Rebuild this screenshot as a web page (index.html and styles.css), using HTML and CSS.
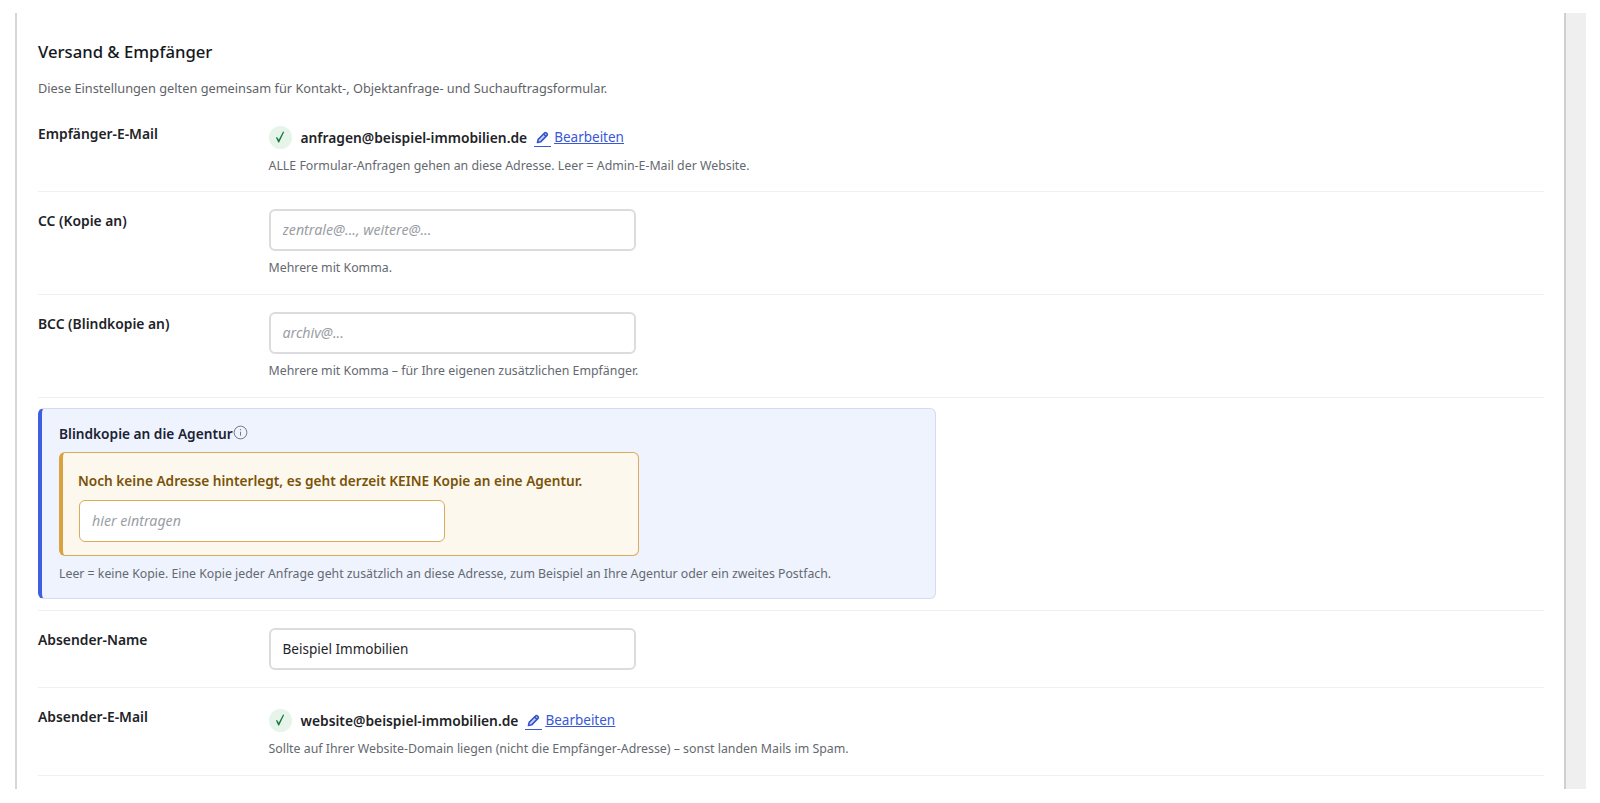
FILE: index.html
```html
<!DOCTYPE html>
<html lang="de">
<head>
<meta charset="utf-8">
<title>Versand &amp; Empfänger</title>
<link rel="stylesheet" href="styles.css">
</head>
<body>
<div class="frame">
  <main class="panel">
    <h2 class="title">Versand &amp; Empfänger</h2>
    <p class="intro">Diese Einstellungen gelten gemeinsam für Kontakt-, Objektanfrage- und Suchauftragsformular.</p>

    <section class="row row-first">
      <div class="label">Empfänger-E-Mail</div>
      <div class="field">
        <div class="verified">
          <span class="check"><svg viewBox="0 0 16 16" width="14" height="14"><path d="M3.4 8.7 4.6 8 6.6 11 11.5 1.8 12.7 2.4 7 14.2 6 14.2Z" fill="#14783a"/></svg></span>
          <strong class="addr">anfragen@beispiel-immobilien.de</strong>
          <a class="edit" href="#"><span class="pen"><svg viewBox="0 0 16 16" width="15" height="15"><path d="M2.6 13.4 3.4 10 10.2 3.2a1.4 1.4 0 0 1 2 0l.6.6a1.4 1.4 0 0 1 0 2L6 12.6Z" fill="#c9d4f7" stroke="#3452cc" stroke-width="1.7" stroke-linejoin="round"/><path d="M9.2 4.2 11.8 6.8" stroke="#3452cc" stroke-width="1.6"/></svg></span><span class="edit-text">Bearbeiten</span></a>
        </div>
        <p class="hint">ALLE Formular-Anfragen gehen an diese Adresse. Leer = Admin-E-Mail der Website.</p>
      </div>
    </section>

    <section class="row">
      <div class="label">CC (Kopie an)</div>
      <div class="field">
        <input class="input" type="text" placeholder="zentrale@..., weitere@...">
        <p class="hint hint-input">Mehrere mit Komma.</p>
      </div>
    </section>

    <section class="row">
      <div class="label">BCC (Blindkopie an)</div>
      <div class="field">
        <input class="input" type="text" placeholder="archiv@...">
        <p class="hint hint-input">Mehrere mit Komma – für Ihre eigenen zusätzlichen Empfänger.</p>
      </div>
    </section>

    <section class="row row-agency">
      <div class="agency">
        <div class="agency-title">Blindkopie an die Agentur<svg class="info" viewBox="0 0 16 16" width="15" height="15"><circle cx="8" cy="8" r="6.8" fill="none" stroke="#6b7280" stroke-width="1"/><path d="M8 7.2V11.4" stroke="#6b7280" stroke-width="1"/><circle cx="8" cy="5" r=".7" fill="#6b7280"/></svg></div>
        <div class="warning">
          <p class="warning-text">Noch keine Adresse hinterlegt, es geht derzeit KEINE Kopie an eine Agentur.</p>
          <input class="input input-warn" type="text" placeholder="hier eintragen">
        </div>
        <p class="hint hint-agency">Leer = keine Kopie. Eine Kopie jeder Anfrage geht zusätzlich an diese Adresse, zum Beispiel an Ihre Agentur oder ein zweites Postfach.</p>
      </div>
    </section>

    <section class="row">
      <div class="label">Absender-Name</div>
      <div class="field">
        <input class="input" type="text" value="Beispiel Immobilien">
      </div>
    </section>

    <section class="row">
      <div class="label">Absender-E-Mail</div>
      <div class="field">
        <div class="verified">
          <span class="check"><svg viewBox="0 0 16 16" width="14" height="14"><path d="M3.4 8.7 4.6 8 6.6 11 11.5 1.8 12.7 2.4 7 14.2 6 14.2Z" fill="#14783a"/></svg></span>
          <strong class="addr">website@beispiel-immobilien.de</strong>
          <a class="edit" href="#"><span class="pen"><svg viewBox="0 0 16 16" width="15" height="15"><path d="M2.6 13.4 3.4 10 10.2 3.2a1.4 1.4 0 0 1 2 0l.6.6a1.4 1.4 0 0 1 0 2L6 12.6Z" fill="#c9d4f7" stroke="#3452cc" stroke-width="1.7" stroke-linejoin="round"/><path d="M9.2 4.2 11.8 6.8" stroke="#3452cc" stroke-width="1.6"/></svg></span><span class="edit-text">Bearbeiten</span></a>
        </div>
        <p class="hint">Sollte auf Ihrer Website-Domain liegen (nicht die Empfänger-Adresse) – sonst landen Mails im Spam.</p>
      </div>
    </section>
  </main>
  <div class="scrollbar"></div>
</div>
</body>
</html>
```

FILE: styles.css
```css
* { box-sizing: border-box; }
html, body { margin: 0; height: 100%; background: #fff; overflow: hidden; }
body {
  font-family: "Noto Sans", sans-serif;
  font-size: 14px;
  color: #1d2327;
  padding: 13px 14px 14px 15px;
}
.frame { display: flex; height: 776px; }
.panel {
  flex: 1;
  min-width: 0;
  border-left: 2px solid #d6d6d6;
  padding: 0 20px 0 21px;
  overflow: hidden;
}
.scrollbar {
  width: 22px;
  background: #efefef;
  border-left: 2px solid #cfcfcf;
}
.title {
  margin: 0;
  padding-top: 26px;
  font-size: 16.7px;
  line-height: 26px;
  font-weight: 500;
  color: #14181c;
}
.intro {
  margin: 13px 0 7px;
  font-size: 12.77px;
  line-height: 20px;
  color: #5f6368;
}
.row {
  display: flex;
  padding: 17px 0;
  border-bottom: 1px solid #f0f0f1;
}
.row-first { padding-bottom: 16px; }
.label {
  width: 230.5px;
  flex: none;
  margin-top: 2px;
  font-weight: 600;
  font-size: 13.85px;
  line-height: 20px;
  color: #1d2327;
}
.field { flex: 1; min-width: 0; }
.verified { display: flex; align-items: center; height: 24px; margin-top: 3px; }
.check {
  width: 23px;
  height: 23px;
  border-radius: 50%;
  background: #e6f4ea;
  display: flex;
  align-items: center;
  justify-content: center;
  margin-right: 9px;
}
.addr { font-weight: 600; font-size: 13.8px; color: #1d2327; }
.edit { display: flex; align-items: center; margin-left: 7px; color: #3858d6; font-size: 13.5px; }
.pen { display: flex; width: 17px; justify-content: center; border-bottom: 1px solid #3858d6; padding-bottom: 1px; margin: 3px 3px 0 0; }
.edit-text { text-decoration: underline; }
.hint { margin: 8px 0 0; font-size: 12.35px; line-height: 18px; color: #646970; }
.hint-input { margin-top: 8px; }
.input {
  display: block;
  width: 367.5px;
  height: 42px;
  padding: 0 12px;
  border: 2px solid #dcdcde;
  border-radius: 6px;
  background: #fff;
  font-family: "Noto Sans", sans-serif;
  font-size: 13.56px;
  color: #1d2327;
  outline: none;
}
.input::placeholder { color: #9a9ea5; font-style: italic; font-size: 14.2px; opacity: 1; }
.row-agency { padding: 10px 0 11px; }
.agency {
  width: 898px;
  height: 191px;
  background: #eef3fe;
  border: 1px solid #d3dcf2;
  border-left: 4px solid #3f5fe0;
  border-radius: 6px;
  padding: 15px 17px 0 17px;
}
.agency-title { display: flex; align-items: center; font-weight: 600; font-size: 13.7px; line-height: 20px; height: 20px; color: #1a2233; }
.info { margin: -4px 0 0 0; }
.warning {
  width: 580px;
  height: 104px;
  margin-top: 8px;
  background: #fcf8ee;
  border: 1px solid #d9ab5a;
  border-left: 4px solid #d8a23f;
  border-radius: 6px;
  padding: 18px 15px 0 16px;
}
.warning-text { margin: 0 0 9px -1px; font-weight: 600; font-size: 13.65px; line-height: 20px; color: #7a5208; }
.input-warn { width: 366px; border: 1.5px solid #d9ab5a; }
.hint-agency { margin-top: 9px; font-size: 12.3px; }
```
